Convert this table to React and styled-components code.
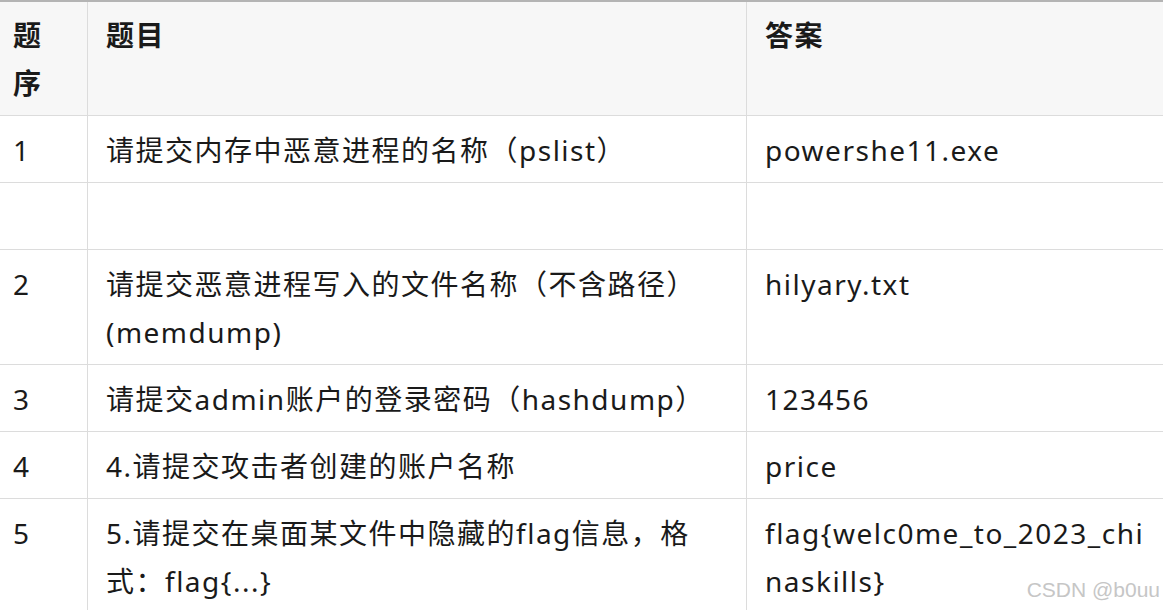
import React from "react";
import styled, { createGlobalStyle } from "styled-components";

const GlobalStyle = createGlobalStyle`
    html, body {
        margin: 0;
        padding: 0;
        background: #ffffff;
        overflow: hidden;
    }
`;

const Page = styled.div`
    width: 1163px;
    height: 610px;
    overflow: hidden;
    position: relative;
    font-family: "Noto Sans", "Noto Sans CJK SC", sans-serif;
    color: #1a1a1a;
`;

const Table = styled.table`
    border-collapse: collapse;
    margin-left: -6px;
    table-layout: fixed;
    width: 1186px;
    border-top: 2px solid #b4b4b4;
    font-size: 28px;
    line-height: 48px;
    letter-spacing: 1.5px;
`;

const HeadCell = styled.th`
    background: #f7f7f7;
    font-weight: 700;
    text-align: left;
    vertical-align: top;
    padding: 9px 18px 8px;
    border: 1px solid #dcdcdc;
    border-top: none;
`;

const Cell = styled.td`
    text-align: left;
    vertical-align: top;
    padding: 10px 18px 8px;
    border: 1px solid #dcdcdc;
    word-break: break-all;
`;

const Watermark = styled.div`
    position: absolute;
    right: 3px;
    bottom: 9px;
    font-family: "Liberation Sans", Arial, sans-serif;
    font-size: 21px;
    line-height: 22px;
    color: #c6c6c6;
    text-shadow: 0 0 1px rgba(255, 255, 255, 0.8);
`;

const rows = [
    ["1", "请提交内存中恶意进程的名称（pslist）", "powershe11.exe"],
    ["\u00a0", "", ""],
    ["2", "请提交恶意进程写入的文件名称（不含路径）(memdump)", "hilyary.txt"],
    ["3", "请提交admin账户的登录密码（hashdump）", "123456"],
    ["4", "4.请提交攻击者创建的账户名称", "price"],
    ["5", "5.请提交在桌面某文件中隐藏的flag信息，格式：flag{...}", "flag{welc0me_to_2023_chinaskills}"],
];

export default function App() {
    return (
        <>
            <GlobalStyle />
            <Page>
                <Table>
                    <colgroup>
                        <col style={{ width: "93px" }} />
                        <col style={{ width: "659px" }} />
                        <col />
                    </colgroup>
                    <thead>
                        <tr>
                            <HeadCell>题序</HeadCell>
                            <HeadCell>题目</HeadCell>
                            <HeadCell>答案</HeadCell>
                        </tr>
                    </thead>
                    <tbody>
                        {rows.map((row, i) => (
                            <tr key={i}>
                                {row.map((text, j) => (
                                    <Cell key={j}>{text}</Cell>
                                ))}
                            </tr>
                        ))}
                    </tbody>
                </Table>
                <Watermark>CSDN @b0uu</Watermark>
            </Page>
        </>
    );
}
